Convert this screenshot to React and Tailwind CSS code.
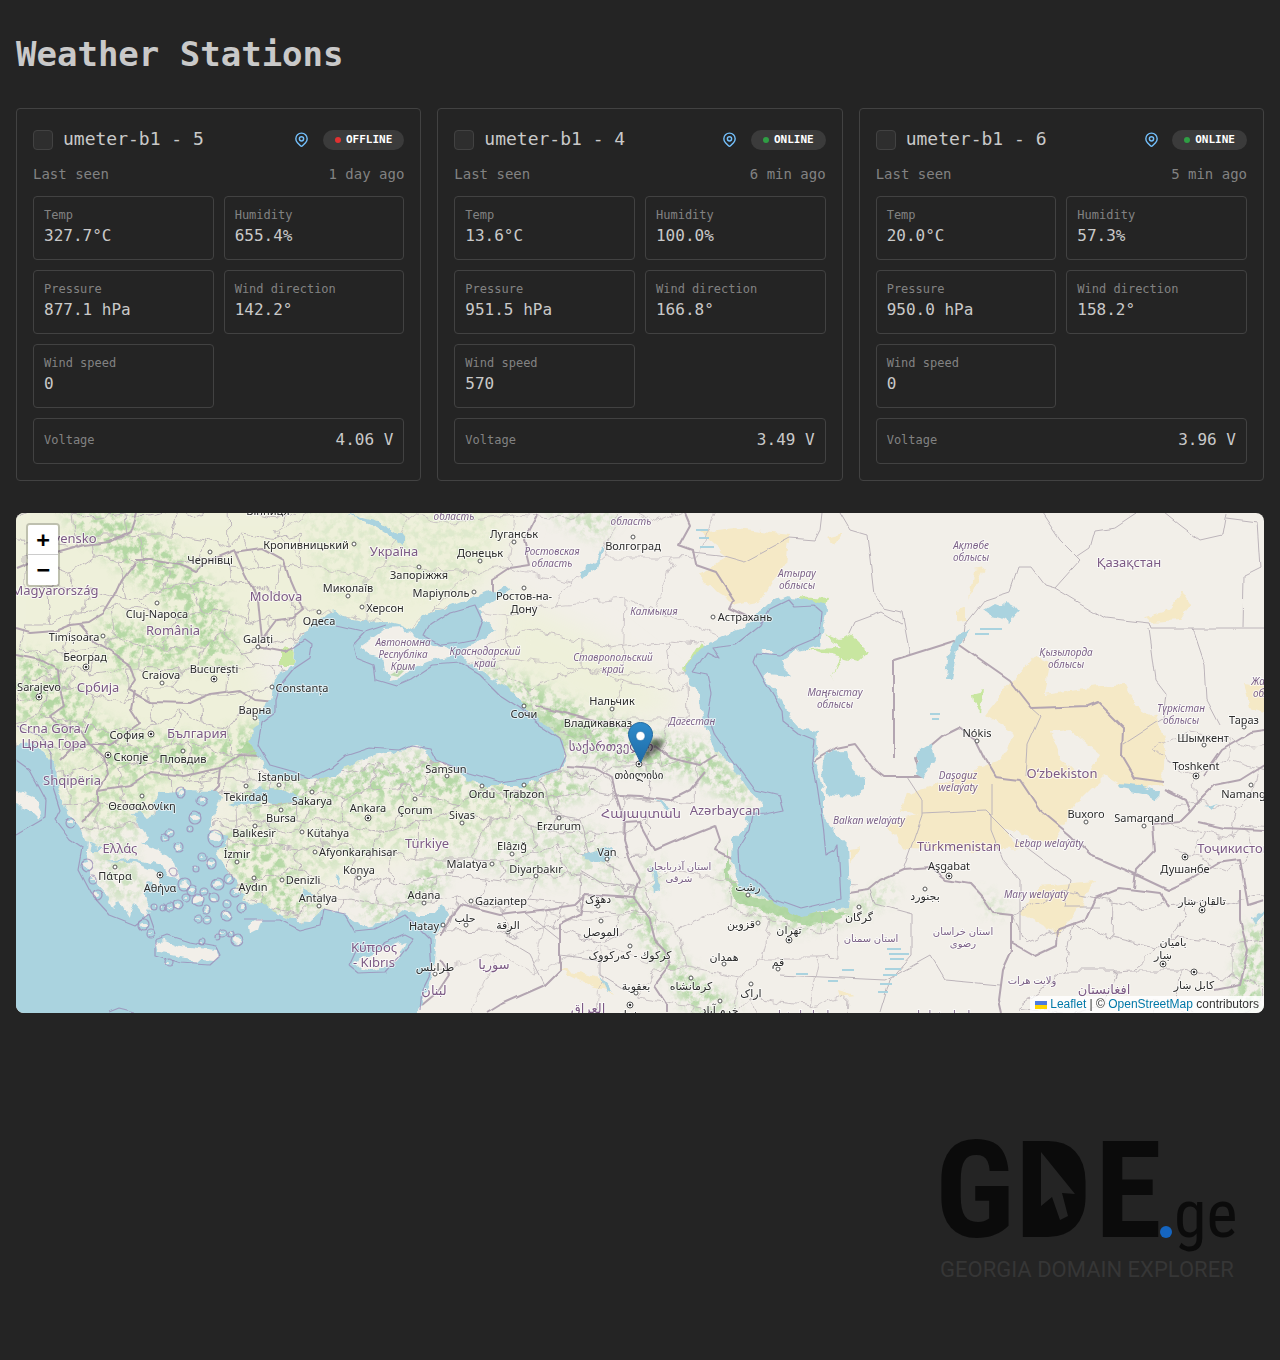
import React from "react";

const stations = [
  { name: "umeter-b1 - 5", online: false, seen: "1 day ago", voltage: "4.06 V", stats: [["Temp", "327.7°C"], ["Humidity", "655.4%"], ["Pressure", "877.1 hPa"], ["Wind direction", "142.2°"], ["Wind speed", "0"]] },
  { name: "umeter-b1 - 4", online: true, seen: "6 min ago", voltage: "3.49 V", stats: [["Temp", "13.6°C"], ["Humidity", "100.0%"], ["Pressure", "951.5 hPa"], ["Wind direction", "166.8°"], ["Wind speed", "570"]] },
  { name: "umeter-b1 - 6", online: true, seen: "5 min ago", voltage: "3.96 V", stats: [["Temp", "20.0°C"], ["Humidity", "57.3%"], ["Pressure", "950.0 hPa"], ["Wind direction", "158.2°"], ["Wind speed", "0"]] },
];

function PinIcon() {
  return (
    <svg viewBox="0 0 24 24" className="size-[17px]" fill="none" stroke="currentColor" strokeWidth="2" strokeLinecap="round" strokeLinejoin="round" aria-hidden="true">
      <path d="M9 11a3 3 0 1 0 6 0a3 3 0 0 0 -6 0" />
      <path d="M17.657 16.657l-4.243 4.243a2 2 0 0 1 -2.827 0l-4.244 -4.243a8 8 0 1 1 11.314 0z" />
    </svg>
  );
}

function StationCard({ station, index }) {
  const id = `station-${index}`;
  return (
    <article className="flex flex-col gap-[10px] rounded-sm border border-[#424242] p-4">
      <header className="flex h-[29px] items-center gap-[10px]">
        <input id={id} type="checkbox" className="size-5 shrink-0 appearance-none rounded-sm border border-[#424242] bg-[#2e2e2e] checked:bg-[#1971c2]" />
        <label htmlFor={id} className="grow pb-0.5 text-lg leading-7 whitespace-nowrap">{station.name}</label>
        <button type="button" aria-label={`Show ${station.name} on the map`} className="flex size-[22px] items-center justify-center text-[#74c0fc]">
          <PinIcon />
        </button>
        <span className="flex h-5 items-center gap-[5px] rounded-full bg-[#3b3b3b] px-3 text-[11px] leading-5 font-bold text-white">
          <span className={station.online ? "size-[6px] rounded-full bg-[#2f9e44]" : "size-[6px] rounded-full bg-[#e03131]"} />
          {station.online ? "ONLINE" : "OFFLINE"}
        </span>
      </header>
      <div className="flex justify-between pb-0.5 text-sm leading-5 text-[#828282]">
        <span>Last seen</span>
        <span>{station.seen}</span>
      </div>
      <dl className="grid grid-cols-2 gap-[10px]">
        {station.stats.map(([label, value]) => (
          <div key={label} className="rounded-sm border border-[#424242] px-[10px] pt-[10px] pb-3">
            <dt className="text-xs leading-[17px] text-[#828282]">{label}</dt>
            <dd className="text-base leading-[23px]">{value}</dd>
          </div>
        ))}
        <div className="col-span-2 flex items-center justify-between rounded-sm border border-[#424242] px-[10px] pt-[9px] pb-[11px]">
          <dt className="text-xs text-[#828282]">Voltage</dt>
          <dd className="text-base">{station.voltage}</dd>
        </div>
      </dl>
    </article>
  );
}

const cities = [
  ["Вінниця", 268, 511], ["Кропивницький", 306, 545, 354, 544], ["Чернівці", 210, 560, 210, 552], ["Cluj-Napoca", 157, 614, 157, 603],
  ["Timișoara", 74, 637, 103, 636], ["Galați", 258, 639, 258, 647], ["Београд", 85, 657, 86, 667, 1], ["București", 214, 669, 214, 679, 1],
  ["Craiova", 161, 675, 162, 683], ["Sarajevo", 39, 687, 39, 697, 1], ["Constanța", 302, 688, 272, 687], ["Варна", 255, 710, 255, 718],
  ["София", 127, 735, 151, 734, 1], ["Скопје", 131, 757, 108, 755, 1], ["Пловдив", 183, 759, 183, 751], ["Одеса", 319, 621, 319, 612],
  ["Миколаїв", 348, 588, 348, 596], ["Херсон", 385, 608, 362, 607], ["Запоріжжя", 419, 575, 419, 567], ["Маріуполь", 441, 593, 474, 592],
  ["Донецьк", 480, 553, 480, 561], ["Луганськ", 514, 534, 514, 542], ["Волгоград", 633, 546, 633, 537], ["Ростов-на-", 524, 596, 524, 588],
  ["Дону", 524, 609], ["Астрахань", 745, 617, 713, 617], ["Сочи", 524, 714, 524, 706], ["Нальчик", 612, 701, 612, 709], ["Владикавказ", 598, 723],
  ["თბილისი", 639, 775, 639, 764, 1], ["İstanbul", 279, 777, 279, 785], ["Tekirdağ", 246, 797, 246, 786], ["Sakarya", 312, 801, 312, 792],
  ["Bursa", 281, 818, 281, 810], ["Balıkesir", 254, 833, 255, 826], ["Kütahya", 328, 833, 302, 832], ["İzmir", 237, 854, 237, 862],
  ["Afyonkarahisar", 358, 852, 315, 852], ["Denizli", 303, 880, 282, 880], ["Konya", 359, 870, 359, 878], ["Aydın", 253, 887, 254, 878],
  ["Antalya", 318, 898, 319, 906], ["Ankara", 368, 808, 368, 818, 1], ["Çorum", 415, 810, 415, 799], ["Samsun", 446, 769, 447, 776],
  ["Ordu", 482, 794, 482, 786], ["Trabzon", 524, 794, 524, 785], ["Sivas", 462, 815, 462, 823], ["Erzurum", 559, 826, 559, 818],
  ["Elâzığ", 512, 846, 512, 854], ["Malatya", 467, 864, 492, 864], ["Diyarbakır", 536, 869, 536, 876], ["Van", 607, 852, 607, 859],
  ["Adana", 424, 895, 424, 903], ["Gaziantep", 501, 901, 471, 901], ["Hatay", 424, 926, 443, 925], ["Θεσσαλονίκη", 142, 806, 142, 796],
  ["Πάτρα", 115, 876, 115, 867], ["Αθήνα", 160, 888, 160, 875, 1], ["حلب", 465, 918, 466, 925], ["الرقة", 508, 925, 508, 932],
  ["طرابلس", 435, 967, 435, 974], ["دهۆک", 598, 899, 598, 906], ["الموصل", 601, 932, 601, 921], ["كركوك - كەرکووک", 630, 955, 630, 946],
  ["بعقوبة", 636, 986, 636, 993], ["بغداد", 630, 1014, 630, 1005, 1], ["رشت", 748, 887, 748, 895], ["قزوین", 741, 924, 758, 923],
  ["تهران", 789, 930, 789, 940, 1], ["گرگان", 859, 917, 859, 907], ["همدان", 724, 957, 724, 964], ["قم", 778, 962, 778, 969],
  ["کرمانشاه", 691, 986, 691, 978], ["اراک", 751, 993, 751, 984], ["خرم آباد", 720, 1010, 720, 1001], ["بجنورد", 925, 896, 925, 889],
  ["Nókis", 977, 733, 977, 741], ["Aşgabat", 949, 866, 949, 876, 1], ["Buxoro", 1086, 814, 1086, 822], ["Samarqand", 1144, 818, 1144, 826],
  ["Toshkent", 1196, 766, 1196, 776, 1], ["Шымкент", 1203, 738, 1204, 745], ["Тараз", 1244, 720, 1244, 727], ["Namangan", 1250, 794, 1251, 785],
  ["Душанбе", 1185, 869, 1185, 857, 1], ["تالقان ښار", 1202, 901, 1202, 910, 1], ["بامیان", 1173, 942], ["ښار", 1163, 955, 1163, 964, 1],
  ["کابل ښار", 1194, 985, 1194, 972, 1],
];

const countries = [
  ["Slovensko", 66, 539], ["Magyarország", 55, 591], ["Moldova", 276, 597], ["România", 173, 631], ["Србија", 98, 688], ["Crna Gora /", 54, 729],
  ["Црна Гора", 54, 744], ["България", 197, 734], ["Shqipëria", 72, 781], ["Ελλάς", 120, 849], ["Україна", 394, 552], ["Türkiye", 427, 844],
  ["Κύπρος", 374, 948], ["- Kıbrıs", 374, 963], ["საქართველო", 611, 747], ["Հայաստան", 641, 814], ["Azərbaycan", 725, 811], ["Қазақстан", 1129, 563],
  ["Oʻzbekiston", 1062, 774], ["Türkmenistan", 959, 847], ["Тоҷикистон", 1234, 849], ["سوريا", 494, 965], ["لبنان", 434, 991], ["العراق", 588, 1009],
  ["افغانستان", 1104, 990],
];

const regions = [
  ["область", 454, 516], ["область", 631, 521], ["Ростовская", 552, 551], ["область", 552, 563], ["Автономна", 403, 642], ["Республіка", 403, 654],
  ["Крим", 403, 666], ["Краснодарский", 485, 651], ["край", 485, 663], ["Калмыкия", 654, 611], ["Ставропольский", 613, 657], ["край", 613, 669],
  ["Дагестан", 692, 721], ["Атырау", 797, 573], ["облысы", 797, 585], ["Маңғыстау", 835, 692], ["облысы", 835, 704], ["Ақтөбе", 971, 545],
  ["облысы", 971, 557], ["Қызылорда", 1066, 652], ["облысы", 1066, 664], ["Түркістан", 1181, 708], ["облысы", 1181, 720], ["Жамбыл", 1271, 681],
  ["облысы", 1271, 693], ["Daşoguz", 958, 775], ["welaýaty", 958, 787], ["Balkan welaýaty", 869, 820], ["Lebap welaýaty", 1049, 843],
  ["Mary welaýaty", 1036, 894],
];

/* Arabic-script regions are set upright. */
const uprightRegions = [
  ["استان آذربایجان", 679, 866], ["شرقی", 679, 878], ["استان سمنان", 871, 938], ["استان خراسان", 963, 931],
  ["رضوی", 963, 943], ["ولایت هرات", 1032, 980], ["استان اصفهان", 800, 1014], ["استان خراسان", 940, 1014],
];

const SEA_MAIN =
  "M336 610L326 612 314 622 303 634 295 645 293 666 279 671 274 683 271 700 263 710 256 723 249 743 259 756 264 768 274 777 290 778 310 779 336 776 356 761 379 755 403 750 416 747 426 751 434 761 456 770 466 780 486 786 523 786 546 776 563 766 567 760 563 740 549 726 529 713 516 693 499 683 479 671 470 664 462 655 466 647 476 643 485 637 497 630 484 618 479 609 503 594 512 588 489 591 469 599 446 608 423 616 414 630 403 625 386 621 362 622 350 619Z";
const CASPIAN =
  "M683 673L691 660 703 646 723 636 743 628 759 613 769 603 786 596 803 599 826 603 827 612 823 625 820 645 797 651 781 660 784 668 793 676 766 674 765 683 776 690 789 716 799 728 819 731 818 746 814 761 819 775 823 796 823 816 833 830 848 846 850 893 849 908 823 910 799 916 773 903 763 895 739 890 732 863 733 840 744 830 746 820 752 812 765 806 746 788 733 766 716 750 706 726 701 710 699 693 688 678Z";
const MEDITERRANEAN =
  "M10 746L32 744 45 752 53 765 59 790 64 808 79 826 88 843 86 860 93 880 105 893 113 908 120 901 130 917 134 903 147 918 150 908 143 893 149 880 162 888 157 872 143 866 128 862 104 861 128 859 148 862 160 866 168 874 180 880 174 862 160 850 139 843 149 838 140 826 133 813 142 812 148 818 155 814 151 805 159 793 183 790 216 791 221 797 214 813 209 830 229 836 216 853 226 870 239 883 234 890 246 896 240 902 263 903 272 910 286 916 298 922 309 923 323 910 336 910 350 918 363 926 386 923 403 910 418 915 433 915 443 903 447 915 436 936 434 960 431 980 414 1020 10 1020Z";

const countryBorders = [
  "M16 568L35 560 60 552 85 545 110 542 130 532 136 513", "M136 560L150 560 180 565 195 572 210 560 235 550 235 552 262 548 284 560 290 580 303 610 293 618 277 620 262 640",
  "M235 552L245 575 258 600 262 640 258 647 285 652 293 648", "M136 562L122 580 115 595 104 613 88 623 70 625 55 631 30 633 16 629", "M80 625L95 643 112 653 130 665 135 680 128 690 150 702 190 703 210 694 240 690 255 700 275 702",
  "M16 655L40 660 58 670 60 690 64 705 50 715 58 725 80 730 90 745 110 745 140 724 131 710 135 690", "M60 760L75 745 90 745 104 758 108 775 98 790 98 803 82 822",
  "M98 790L130 785 150 772 185 776 220 768 240 755 263 756", "M220 768L218 785 210 793", "M538 513L524 540 530 565 510 568 492 580 492 600",
  "M534 706L560 712 590 720 625 728 650 742 670 758 700 765 716 755", "M567 766L595 768 612 778 616 795 640 796 670 800 690 790 705 772", "M616 795L625 823 640 822 655 850 690 835 715 825 720 840 716 850 740 862",
  "M625 823L624 840 630 860 640 880 634 898 585 895 575 905 540 910 500 915 460 905 450 918 440 935", "M585 895L580 915 560 925 560 970 545 985 500 1005 487 1013", "M634 898L650 920 655 940 665 950 670 965 655 985 668 1005 668 1013",
  "M440 960L450 975 440 990 422 1005", "M685 513L690 525 679 545 693 550 696 565 716 572 734 600 730 608 755 620", "M894 758L894 660 954 641 1010 680 1032 708 1088 706 1098 702 1123 727 1122 756 1135 778 1164 782",
  "M814 761L835 748 855 744 873 768 885 777 922 777 916 758 942 736 958 728 975 740 985 760 995 777 1020 780 1040 810 1070 835 1090 855 1134 874 1168 890 1190 880 1218 863 1240 860 1248 905 1264 900",
  "M848 893L868 890 880 880 903 870 930 868 945 880 970 884 985 900 993 912 1012 914 1012 950 1003 970 999 1000 1002 1013", "M1012 942L1035 955 1056 945 1057 930 1085 920 1095 898 1120 888 1160 893 1168 905",
  "M1134 888L1136 870 1155 850 1153 825 1180 822 1190 812 1185 800 1165 790", "M1204 776L1222 750 1250 733 1264 731", "M1190 812L1200 800 1215 785 1240 780 1264 765", "M1198 822L1225 828 1264 830", "M1240 890L1240 920 1248 950 1240 985 1215 990",
];

const seaLines = [
  "M293 648L305 640 312 645 310 658 295 668 281 685 276 700 276 712 262 722 258 745 270 765 295 772 310 778 330 768 345 756 370 748 400 750 412 745 430 748 436 760 470 773 500 782 530 778 560 768 566 755 560 738 540 725 520 708 500 695 480 675 460 663 433 665 410 680 396 686 376 680 374 665 356 658 353 645 365 632 386 625",
  "M336 626L362 632", "M424 636L430 625 450 612 475 605 482 620 475 640 460 643 440 645 424 636", "M693 672L707 652 719 658 712 648 735 645 760 625 769 610 789 600 795 607 815 606 822 612 820 635 796 645 780 656 757 654 754 662 766 684 782 710 783 722 797 733 814 740 812 760 817 785 823 825 826 855 835 850 838 845 841 899 800 909 775 900 755 880 739 870 738 850 750 830 753 815 765 814 784 810 780 796 755 790 735 763 715 735 708 715 712 695 708 675 693 672",
  "M16 725L40 735 52 755 52 785 60 810 55 820 70 840 82 848 78 870 90 893 110 915 135 925 148 915 155 935", "M16 760L30 770 46 800 45 818 16 835", "M245 920L280 920 300 930 320 925 323 910 345 915 355 932 375 930 405 915 430 940 432 970 422 990 420 1010",
  "M348 965L355 950 380 945 405 934 413 938 400 955 385 972 358 973 348 965", "M155 940L168 935 190 942 217 947 221 955 210 965 180 963 155 955 155 940", "M108 1012L118 1008 134 1012",
];

const adminLines = [
  "M822 513L820 530 815 540 790 538 745 562 720 555 692 552", "M840 513L850 530 867 535 870 560 874 595 885 608 902 612 910 655", "M850 633L855 622 882 612 902 624",
  "M1042 513L1060 540 1080 560 1055 588 1105 618 1150 623 1152 629 1264 629", "M1136 513L1115 527 1095 530 1090 548 1078 556", "M963 642L965 625 985 600 1010 592 1018 568 1032 568 1045 585 1055 588",
  "M1165 513L1180 525 1200 540 1222 535 1226 513", "M1226 518L1257 522 1260 568 1244 576 1243 628", "M1149 629L1152 650 1156 680 1166 693 1163 718", "M1193 629L1205 665 1207 700 1220 725", "M1032 708L1041 716 1028 745 1026 777",
  "M1124 744L1164 718", "M907 777L922 800 922 815 910 850 903 870", "M922 813L985 810 1010 835 1070 880 1065 907 1100 907", "M991 785L991 830 1003 860 1020 880 1020 940",
  "M530 765L545 790 550 815 580 820 590 855 620 870", "M870 890L875 905 912 915 912 955 890 980 880 1013", "M780 975L885 980 930 955 945 980 1000 985", "M580 870L600 882 640 888",
  "M560 955L600 960 600 975 625 990", "M505 940L530 955 545 985", "M525 912L560 940",
];

/* Jittered honeycomb that stands for province boundaries. */
function mesh(x0, y0, x1, y1, size) {
  let seed = 7;
  const rnd = () => {
    seed = (seed * 16807) % 2147483647;
    return seed / 2147483647 - 0.5;
  };
  const cols = Math.ceil((x1 - x0) / size) + 1;
  const rows = Math.ceil((y1 - y0) / size) + 1;
  const pts = [];
  for (let r = 0; r < rows; r++) {
    pts.push([]);
    for (let c = 0; c < cols; c++) pts[r].push([Math.round(x0 + c * size + rnd() * size * 0.8), Math.round(y0 + r * size + rnd() * size * 0.8)]);
  }
  let d = "";
  for (let r = 0; r < rows; r++) {
    for (let c = 0; c < cols; c++) {
      const [x, y] = pts[r][c];
      if (c + 1 < cols) d += `M${x} ${y}L${pts[r][c + 1].join(" ")}`;
      if (r + 1 < rows && (r + c) % 2 === 0) d += `M${x} ${y}L${pts[r + 1][c].join(" ")}`;
    }
  }
  return d;
}

const islands = [
  [181, 793, 4], [195, 818, 5], [202, 801, 4], [190, 829, 2], [216, 838, 7], [211, 863, 4], [178, 848, 4], [170, 833, 3], [165, 838, 3], [174, 872, 3], [184, 884, 5], [192, 890, 4], [198, 900, 5], [178, 905, 4],
  [170, 907, 3], [186, 897, 3], [205, 892, 3], [214, 898, 4], [206, 910, 3], [198, 919, 3], [208, 920, 3], [226, 915, 4], [218, 884, 5], [229, 879, 4], [227, 904, 3], [243, 908, 4], [222, 933, 3], [217, 937, 2], [230, 934, 2],
  [237, 940, 5], [154, 906, 2], [163, 907, 2], [97, 895, 4], [87, 866, 5], [92, 880, 3], [70, 823, 4], [143, 925, 4], [150, 934, 3], [168, 962, 3], [202, 942, 2], [195, 868, 2], [235, 892, 4], [202, 857, 3],
];

function Labels({ items, size, color, italic }) {
  return (
    <g fontSize={size} fill={color} fontStyle={italic ? "italic" : "normal"} textAnchor="middle" stroke="#ffffff" strokeOpacity="0.65" strokeWidth="2" strokeLinejoin="round" paintOrder="stroke">
      {items.map(([text, x, y], i) => (
        <text key={i} x={x} y={y + 4}>{text}</text>
      ))}
    </g>
  );
}

function MapCanvas() {
  return (
    <svg viewBox="16 513 1248 500" preserveAspectRatio="xMidYMid slice" className="block h-full w-full" fontFamily="'Noto Sans', 'DejaVu Sans', sans-serif" role="img" aria-label="Map of weather stations">
      <defs>
        <filter id="coast" x="0" y="500" width="1280" height="530" filterUnits="userSpaceOnUse" colorInterpolationFilters="sRGB">
          <feTurbulence type="fractalNoise" baseFrequency="0.1" numOctaves="2" seed="4" />
          <feDisplacementMap in="SourceGraphic" scale="9" xChannelSelector="R" yChannelSelector="G" />
        </filter>
        <filter id="lines" x="0" y="500" width="1280" height="530" filterUnits="userSpaceOnUse" colorInterpolationFilters="sRGB">
          <feTurbulence type="fractalNoise" baseFrequency="0.08" numOctaves="2" seed="4" />
          <feDisplacementMap in="SourceGraphic" scale="12" xChannelSelector="R" yChannelSelector="G" />
          <feGaussianBlur stdDeviation="0.3" />
        </filter>
        <filter id="water-lines" x="0" y="500" width="1280" height="530" filterUnits="userSpaceOnUse" colorInterpolationFilters="sRGB">
          <feTurbulence type="fractalNoise" baseFrequency="0.05" numOctaves="1" seed="4" />
          <feDisplacementMap in="SourceGraphic" scale="6" xChannelSelector="R" yChannelSelector="G" />
          <feGaussianBlur stdDeviation="0.3" />
        </filter>
        <filter id="woods" x="0" y="500" width="1280" height="530" filterUnits="userSpaceOnUse">
          <feGaussianBlur in="SourceGraphic" stdDeviation="7" result="area" />
          <feTurbulence type="fractalNoise" baseFrequency="0.13" numOctaves="5" seed="9" />
          <feColorMatrix values="0 0 0 0 0 0 0 0 0 0 0 0 0 0 0 4 0 0 0 -1.6" result="patch" />
          <feComposite in="area" in2="patch" operator="in" />
        </filter>
        <filter id="soft" x="0" y="500" width="1280" height="530" filterUnits="userSpaceOnUse">
          <feGaussianBlur stdDeviation="14" />
        </filter>
        <filter id="shade" x="-50%" y="-50%" width="200%" height="200%">
          <feGaussianBlur stdDeviation="2" />
        </filter>
        <linearGradient id="pin" x1="0" y1="0" x2="0" y2="1">
          <stop offset="0" stopColor="#2e8bcb" />
          <stop offset="1" stopColor="#1f6ba6" />
        </linearGradient>
      </defs>
      <rect x="16" y="513" width="1248" height="500" fill="#f2efe9" />

      <path filter="url(#soft)" fill="#eef0da" d="M0 500H520L500 570 420 640 250 640 280 720 240 790 90 830 0 740ZM500 590L600 640 690 710 600 720 500 680Z" />
      <path filter="url(#soft)" fill="#f0f0df" d="M210 800L430 780 560 790 480 840 350 880 280 920 210 880Z" />

      <g filter="url(#woods)" fill="#a9d39a" opacity="0.85">
        <path d="M60 513L130 513 180 550 225 600 240 660 200 670 180 620 150 590 110 560Z" />
        <path d="M100 615L190 640 185 670 130 665 120 690 105 650Z" />
        <path d="M16 650L60 660 100 720 130 730 210 740 260 720 258 760 150 780 90 760 50 730 16 720Z" />
        <path d="M60 770L130 770 160 790 130 850 150 900 110 900 90 840Z" opacity="0.6" />
        <path d="M225 790L300 778 350 765 430 750 480 785 560 768 600 790 540 810 440 800 340 800 260 820Z" />
        <path d="M220 830L280 830 300 890 330 910 280 920 240 890ZM350 900L380 925 440 890 450 850 420 870 400 905Z" />
        <path d="M470 660L530 680 600 715 660 735 710 745 760 805 730 800 690 775 640 770 570 755 530 715Z" />
        <path d="M280 800L450 800 600 830 620 880 520 885 440 840 300 880Z" opacity="0.45" />
        <path d="M296 513L500 513 470 590 330 600Z" opacity="0.25" />
        <path d="M610 890L640 895 680 960 740 1010 690 1013 650 950Z" />
        <path d="M722 840L732 890 760 900 800 915 850 908 890 885 895 895 850 918 800 930 740 910 720 880Z" />
        <path d="M1245 930L1264 920 1264 1013 1230 1005Z" />
        <path d="M16 690L60 700 70 820 50 760ZM540 513L620 513 600 540ZM980 890L1010 910 990 915ZM640 860L660 860 660 890 650 895Z" opacity="0.7" />
      </g>
      <g filter="url(#coast)">
        <path fill="#a9d39a" opacity="0.85" d="M726 845L731 880 748 896 775 902 800 914 832 910 848 915 832 922 800 925 765 910 738 903 726 880ZM243 746L260 745 258 756 236 752Z" />
        <path fill="#a9d39a" opacity="0.5" d="M495 680L520 700 560 720 600 735 565 745 540 725Z" />
        <path fill="#c8e6a0" d="M824 633L840 640 850 634 868 652 857 662 842 658 832 680 840 658 806 649 842 648Z M798 596L828 598 826 606 805 603ZM683 670L700 643 703 646 690 680ZM281 650L294 648 293 665 281 665ZM973 693L985 690 981 712 974 704ZM1060 798L1072 804 1068 806Z" />
        <path fill="#f5e9c6" d="M700 532L735 528 790 534 786 565 760 600 735 605 715 592 700 575 728 555 715 545ZM826 537L842 533 835 545ZM1145 617L1170 610 1182 592 1190 605 1180 620 1150 622ZM955 610L966 608 966 620 955 622ZM1243 683L1264 685 1264 712 1250 708ZM974 570L984 568 968 600Z" />
        <path fill="#f5e9c6" d="M1005 690L1035 655 1050 662 1045 695 1090 688 1125 685 1135 705 1158 720 1165 745 1163 783 1130 790 1105 775 1075 805 1050 845 1010 830 960 820 900 812 905 795 950 780 1000 760 1015 735 985 715ZM885 826L925 812 985 815 1025 848 980 850 905 848ZM1040 885L1095 880 1080 905 1060 935 1020 912ZM850 850L861 848 850 865ZM557 968L600 978 614 995 590 985ZM838 990L856 995 840 997Z" />
        <path fill="#f2efe9" d="M1050 732L1070 730 1100 755 1085 780 1060 760Z" />
      </g>
      <g filter="url(#lines)" fill="none" stroke="#c0b8bd" strokeWidth="1">
        <path d={mesh(16, 513, 296, 800, 26)} />
        <path d={mesh(210, 770, 640, 910, 27)} />
        <path d={mesh(296, 513, 680, 640, 52)} strokeOpacity="0.7" />
        <path d={mesh(490, 640, 700, 790, 42)} strokeOpacity="0.8" />
        <path d={mesh(640, 880, 840, 1013, 42)} strokeOpacity="0.8" />
        <path d={mesh(1030, 900, 1250, 1020, 38)} />
        <path d={mesh(1165, 740, 1290, 860, 30)} strokeOpacity="0.8" />
        <path d={mesh(430, 910, 600, 1013, 54)} strokeOpacity="0.6" />
      </g>
      <g filter="url(#water-lines)" fill="none" stroke="#bcb4ba" strokeWidth="1">
        {adminLines.map((d) => <path key={d} d={d} />)}
      </g>
      <g filter="url(#water-lines)" fill="none" stroke="#b3a5b1" strokeWidth="2" strokeLinejoin="round">
        {countryBorders.map((d) => <path key={d} d={d} />)}
      </g>

      <g filter="url(#coast)" fill="#aad3df">
        <path d={SEA_MAIN} />
        <path d={CASPIAN} />
        <path d={MEDITERRANEAN} />
        <path d="M226 803L246 798 256 788 280 790 290 795 306 800 280 804 262 803 240 806ZM826 752L847 751 852 768 866 780 866 790 850 797 826 793 822 775ZM919 750L932 746 934 760 924 777 916 772ZM946 679L948 660 957 635 970 629 959 645 952 679Z" />
        <path d="M985 610L995 604 1003 607 1004 600 1015 606 1019 611 1010 622 1000 618 988 615ZM584 855L612 846 614 850 605 864 586 860ZM586 895L592 905 596 911ZM650 866L656 872 660 890 654 892ZM578 516L584 513ZM345 513L378 522 404 538 404 545 378 528ZM580 572L597 560 602 545 604 550 597 568 582 577ZM655 797L670 808 666 813ZM600 975L612 990 606 993ZM1120 783L1140 785 1158 792 1157 800 1145 793 1122 788ZM1205 806L1220 802 1212 808ZM1252 918L1264 910 1256 925ZM492 680L500 677 494 681Z" />
        <path d="M88 843L104 850 92 850ZM300 900L305 885 312 895ZM336 875L338 885 340 878Z" />
      </g>
      <path fill="#aad3df" d="M887 948h14v2h-14zM889 953h20v2h-20zM890 958h14v2h-14zM885 968h16v2h-16zM883 974h14v2h-14zM880 983h12v2h-12zM878 991h10v2h-10zM796 973h12v2h-12zM828 980h10v2h-10zM842 969h12v2h-12zM696 529h12v2h-12zM699 537h10v2h-10zM700 546h14v2h-14zM980 628h22v2h-22zM975 633h14v2h-14zM930 713h10v2h-10zM932 718h7v2h-7z" />
      <g filter="url(#coast)" fill="#f2efe9">
        <path d="M386 628L375 636 359 647 364 651 384 658 386 672 391 680 400 678 416 667 433 660 453 656 453 649 433 647 420 640 410 633 403 627Z" />
        <path d="M10 788L34 798 41 812 38 820 28 810 10 803ZM154 942L165 940 180 946 217 950 219 955 213 962 190 960 156 953ZM354 962L372 953 405 940 396 963 375 970 360 968ZM249 926L262 918 258 930 250 934ZM762 650L775 650 770 654Z" />
        {islands.map(([x, y, r]) => <ellipse key={`${x}-${y}`} cx={x} cy={y} rx={Math.max(r - 1, 1)} ry={Math.max(r - 2, 1)} />)}
      </g>
      <path fill="#a9d39a" opacity="0.7" d="M390 675L400 669 410 665 398 677Z" />
      <g filter="url(#water-lines)" fill="none" stroke="#9b8db8" strokeOpacity="0.8" strokeWidth="1.2" strokeLinejoin="round">
        {seaLines.map((d) => <path key={d} d={d} />)}
        {islands.map(([x, y, r]) => <circle key={`${x}-${y}`} cx={x} cy={y} r={r + 1} />)}
      </g>

      <g fill="#ffffff" stroke="#555555" strokeWidth="1">
        {cities.filter((c) => c[3]).map((c) => <circle key={c[0]} cx={c[3]} cy={c[4]} r={c[5] ? 3 : 2} />)}
      </g>
      <g fill="#333333">
        {cities.filter((c) => c[5]).map((c) => <circle key={c[0]} cx={c[3]} cy={c[4]} r="1.3" />)}
      </g>
      <Labels items={regions} size="10" color="#7c6288" italic />
      <Labels items={uprightRegions} size="10" color="#7c6288" />
      <Labels items={countries} size="13" color="#7c5a85" />
      <Labels items={cities} size="11" color="#2b2b2b" />

      <path filter="url(#shade)" fill="#000000" fillOpacity="0.5" d="M641 763L645 746 656 738 664 741 662 748Z" />
      <g transform="translate(628 722)">
        <path fill="url(#pin)" stroke="#2468a0" d="M12.5.5C5.9.5.5 5.900.5 12.400c0 2.300.7 4.300 1.700 6.600L12.500 40.500 22.800 19c1-2.300 1.700-4.300 1.700-6.600C24.500 5.900 19.100.5 12.500.5Z" />
        <circle cx="12.5" cy="14" r="4.500" fill="#ffffff" stroke="#2468a0" strokeOpacity="0.5" />
      </g>
    </svg>
  );
}

function StationMap() {
  return (
    <section className="relative mt-8 h-[500px] overflow-hidden rounded-lg">
      <MapCanvas />
      <div className="absolute top-[10px] left-[10px] flex flex-col rounded-sm border-2 border-black/20 bg-clip-padding font-[DejaVu_Sans_Mono,monospace] text-[22px] leading-[30px] font-bold text-black">
        <button type="button" aria-label="Zoom in" className="h-[30px] w-[30px] rounded-t-[2px] border-b border-[#cccccc] bg-white">+</button>
        <button type="button" aria-label="Zoom out" className="h-[30px] w-[30px] rounded-b-[2px] bg-white">−</button>
      </div>
      <p className="absolute right-0 bottom-0 flex items-center gap-[3px] bg-white/80 px-[5px] font-[Liberation_Sans,Arial,sans-serif] text-xs leading-[17px] text-[#333333]">
        <svg viewBox="0 0 12 8" className="h-2 w-3" aria-hidden="true">
          <path fill="#4c7be1" d="M0 0h12v4H0z" />
          <path fill="#ffd500" d="M0 4h12v4H0z" />
        </svg>
        <span>
          <a href="#leaflet" className="text-[#0078a8]">Leaflet</a> | © <a href="#osm" className="text-[#0078a8]">OpenStreetMap</a> contributors
        </span>
      </p>
    </section>
  );
}

function Logo() {
  return (
    <svg viewBox="0 0 304 176" className="w-[304px]" role="img" aria-label="GDE.ge Georgia Domain Explorer">
      <g fill="#0b0b0b" fontFamily="'Roboto Condensed', 'Roboto', sans-serif" fontWeight="700" fontSize="136">
        <text x="-1" y="128">G</text>
        <text x="79" y="128">D</text>
        <text x="159" y="128">E</text>
      </g>
      <path fill="#0b0b0b" d="M100 44H132V116H100Z" />
      <path fill="#242424" d="M105 43L139 85 126 84 132 107 124 111 116 88 105 97Z" />
      <circle cx="230" cy="123" r="6" fill="#1565c0" />
      <text x="238" y="128" fill="#0b0b0b" fontSize="66" fontFamily="'Roboto Condensed', 'Roboto', sans-serif">ge</text>
      <text x="4" y="168" fill="#363636" fontSize="22" fontFamily="'Roboto', sans-serif">GEORGIA DOMAIN EXPLORER</text>
    </svg>
  );
}

export default function App() {
  return (
    <div className="min-h-screen bg-[#242424] px-4 font-[DejaVu_Sans_Mono,monospace] text-[#c9c9c9]">
      <h1 className="pt-8 text-[34px] leading-11 font-bold">Weather Stations</h1>
      <main>
        <div className="mt-8 grid grid-cols-3 gap-4">
          {stations.map((s, i) => <StationCard key={s.name} station={s} index={i} />)}
        </div>
        <StationMap />
      </main>
      <footer className="flex justify-end pt-24 pr-6 pb-20">
        <Logo />
      </footer>
    </div>
  );
}
